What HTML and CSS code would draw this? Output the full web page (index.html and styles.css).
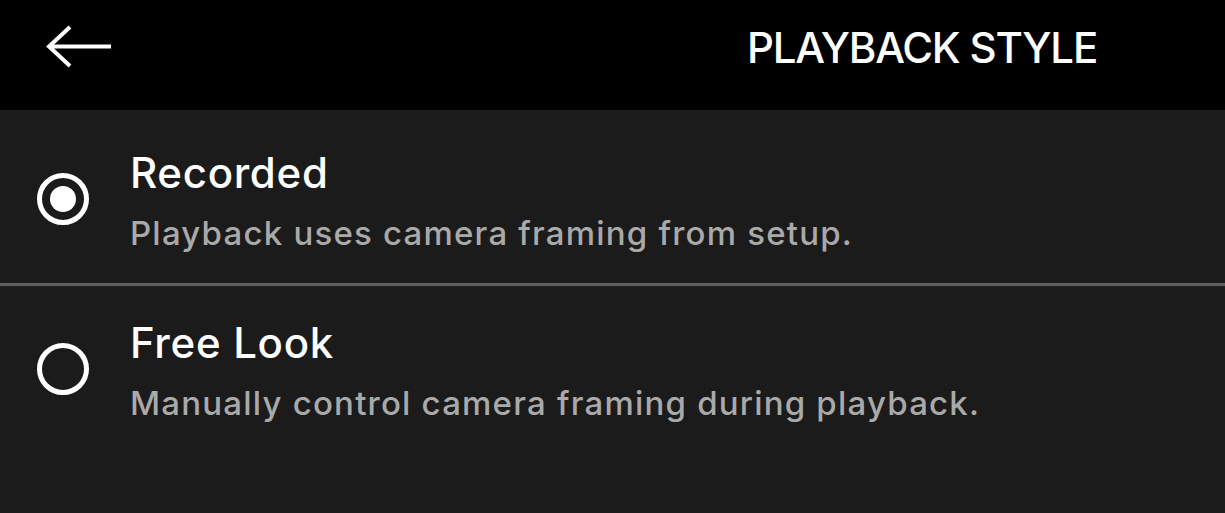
FILE: index.html
```html
<!DOCTYPE html>
<html>
<head>
<meta charset="utf-8">
<link rel="stylesheet" href="styles.css">
</head>
<body>
<div class="app">
  <header class="topbar">
    <button class="back" aria-label="Back">
      <svg width="68" height="46" viewBox="0 0 68 46">
        <path d="M24 3 L3 22.5 L24 42 M3 22.5 H65" fill="none" stroke="#fff" stroke-width="4"/>
      </svg>
    </button>
    <h1 class="title">PLAYBACK STYLE</h1>
  </header>
  <main class="options">
    <div class="option">
      <span class="radio checked"></span>
      <div class="text">
        <div class="label">Recorded</div>
        <div class="desc">Playback uses camera framing from setup.</div>
      </div>
    </div>
    <div class="divider"></div>
    <div class="option">
      <span class="radio"></span>
      <div class="text">
        <div class="label">Free Look</div>
        <div class="desc">Manually control camera framing during playback.</div>
      </div>
    </div>
  </main>
</div>
</body>
</html>
```
FILE: styles.css
```css
html, body {
  margin: 0;
  padding: 0;
  background: #1b1b1b;
  font-family: "Inter", "Noto Sans", sans-serif;
  color: #fff;
}
.app {
  width: 1225px;
  height: 513px;
  display: flex;
  flex-direction: column;
  background: #1b1b1b;
}
.topbar {
  height: 110px;
  box-sizing: border-box;
  background: #000;
  display: flex;
  align-items: flex-start;
  padding-top: 23px;
  flex-shrink: 0;
}
.back {
  background: none;
  border: 0;
  padding: 0;
  margin-left: 46px;
  margin-top: 1px;
  display: flex;
}
.title {
  margin: 0 0 0 633px;
  font-size: 42px;
  line-height: 50px;
  font-weight: 500;
  letter-spacing: -1.2px;
}
.options {
  display: flex;
  flex-direction: column;
  padding-top: 6px;
}
.option {
  display: flex;
  align-items: flex-start;
  box-sizing: border-box;
  height: 167px;
  padding: 32px 0 0 37px;
}
.radio {
  width: 52px;
  height: 52px;
  box-sizing: border-box;
  border: 5px solid #fff;
  border-radius: 50%;
  display: flex;
  align-items: center;
  justify-content: center;
  flex-shrink: 0;
  margin-top: 25px;
}
.radio.checked::after {
  content: "";
  width: 26px;
  height: 26px;
  border-radius: 50%;
  background: #fff;
}
.text {
  margin-left: 41px;
  display: flex;
  flex-direction: column;
  gap: 15px;
}
.label {
  font-size: 42px;
  font-weight: 500;
  line-height: 50px;
  letter-spacing: 0.7px;
}
.desc {
  font-size: 33px;
  font-weight: 500;
  color: #a9a9a9;
  line-height: 40px;
  letter-spacing: 1.2px;
}
.divider {
  height: 3px;
  background: #5e5e5e;
}
```
